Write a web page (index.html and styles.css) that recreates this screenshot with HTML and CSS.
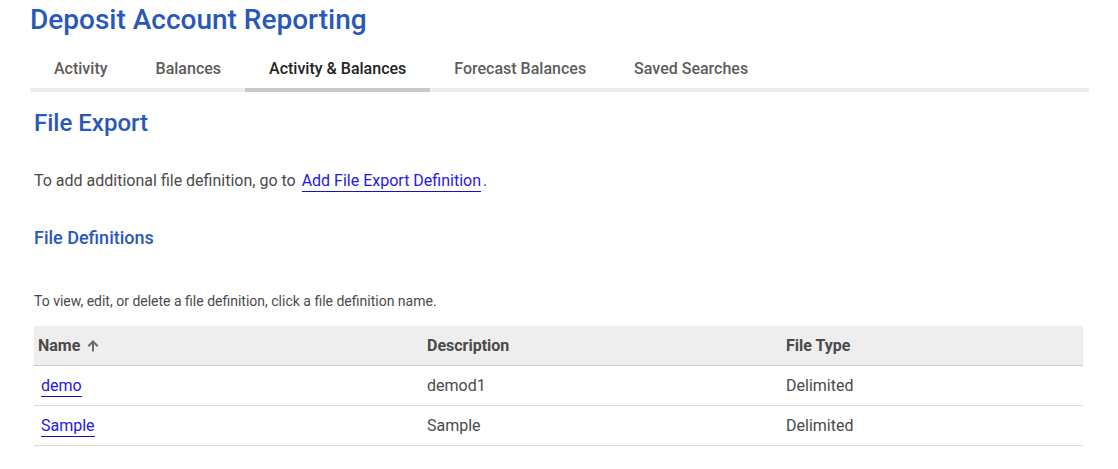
FILE: index.html
```html
<!DOCTYPE html>
<html lang="en">
<head>
    <meta charset="UTF-8">
    <title>Deposit Account Reporting</title>
    <link rel="stylesheet" href="styles.css">
</head>
<body>
    <header>
        <h1>Deposit Account Reporting</h1>
        <nav class="tabs">
            <a href="#">Activity</a>
            <a href="#">Balances</a>
            <a href="#" class="active" aria-current="page">Activity &amp; Balances</a>
            <a href="#">Forecast Balances</a>
            <a href="#">Saved Searches</a>
        </nav>
    </header>

    <main>
        <h2>File Export</h2>
        <p class="intro">To add additional file definition, go to <a href="#" class="link add-link">Add File Export Definition</a>.</p>

        <h3>File Definitions</h3>
        <p class="hint">To view, edit, or delete a file definition, click a file definition name.</p>

        <table class="definitions">
            <thead>
                <tr>
                    <th class="col-name">Name
                        <svg class="sort-icon" width="12" height="12" viewBox="0 0 12 12" aria-hidden="true">
                            <path d="M6 11.5V1.5M1.3 6.2L6 1.5L10.7 6.2" />
                        </svg>
                    </th>
                    <th class="col-desc">Description</th>
                    <th>File Type</th>
                </tr>
            </thead>
            <tbody>
                <tr>
                    <td><a href="#" class="link">demo</a></td>
                    <td>demod1</td>
                    <td>Delimited</td>
                </tr>
                <tr>
                    <td><a href="#" class="link">Sample</a></td>
                    <td>Sample</td>
                    <td>Delimited</td>
                </tr>
            </tbody>
        </table>
    </main>
</body>
</html>
```
FILE: styles.css
```css
body {
    font-family: Roboto, Arial, sans-serif;
    font-size: 16px;
    line-height: 20px;
    margin: 0;
    padding: 4px 29px 0 30px;
    background-color: #fff;
    color: #4a4a4a;
}

h1, h2, h3, p {
    margin: 0;
}

h1, h2, h3 {
    color: #2858b8;
    font-weight: 500;
}

h1 {
    font-size: 28px;
    line-height: 32px;
}

.tabs {
    display: flex;
    margin-top: 12px;
    border-bottom: 4px solid #eee;
}

.tabs a {
    padding: 11px 24px 9px;
    margin-bottom: -4px;
    border-bottom: 4px solid transparent;
    color: #5c5c5c;
    font-weight: 500;
    text-decoration: none;
}

.tabs .active {
    border-bottom-color: #c8c8c8;
    color: #222;
}

main {
    padding: 15px 6px 0 4px;
}

h2 {
    font-size: 24px;
    line-height: 32px;
}

.intro {
    margin-top: 32px;
}

h3 {
    margin-top: 35px;
    font-size: 18px;
    line-height: 24px;
}

.hint {
    margin-top: 41px;
    font-size: 14px;
}

.link {
    padding-bottom: 1px;
    border-bottom: 1px solid #1c10b8;
    color: #2418e0;
    text-decoration: none;
}

.add-link {
    margin: 0 2px;
}

.definitions {
    width: 100%;
    margin-top: 15px;
    border-collapse: collapse;
    table-layout: fixed;
    text-align: left;
}

.definitions th {
    height: 39px;
    padding: 0 4px;
    background-color: #eee;
    border-bottom: 1px solid #ccc;
    font-weight: 700;
}

.definitions td {
    height: 39px;
    padding: 0 4px;
    border-bottom: 1px solid #dadada;
}

.definitions td:first-child {
    padding-left: 7px;
}

.col-name {
    width: 381px;
}

.col-desc {
    width: 351px;
}

.sort-icon {
    margin-left: 3px;
    vertical-align: -1px;
    fill: none;
    stroke: #6a6a6a;
    stroke-width: 2;
}
```
